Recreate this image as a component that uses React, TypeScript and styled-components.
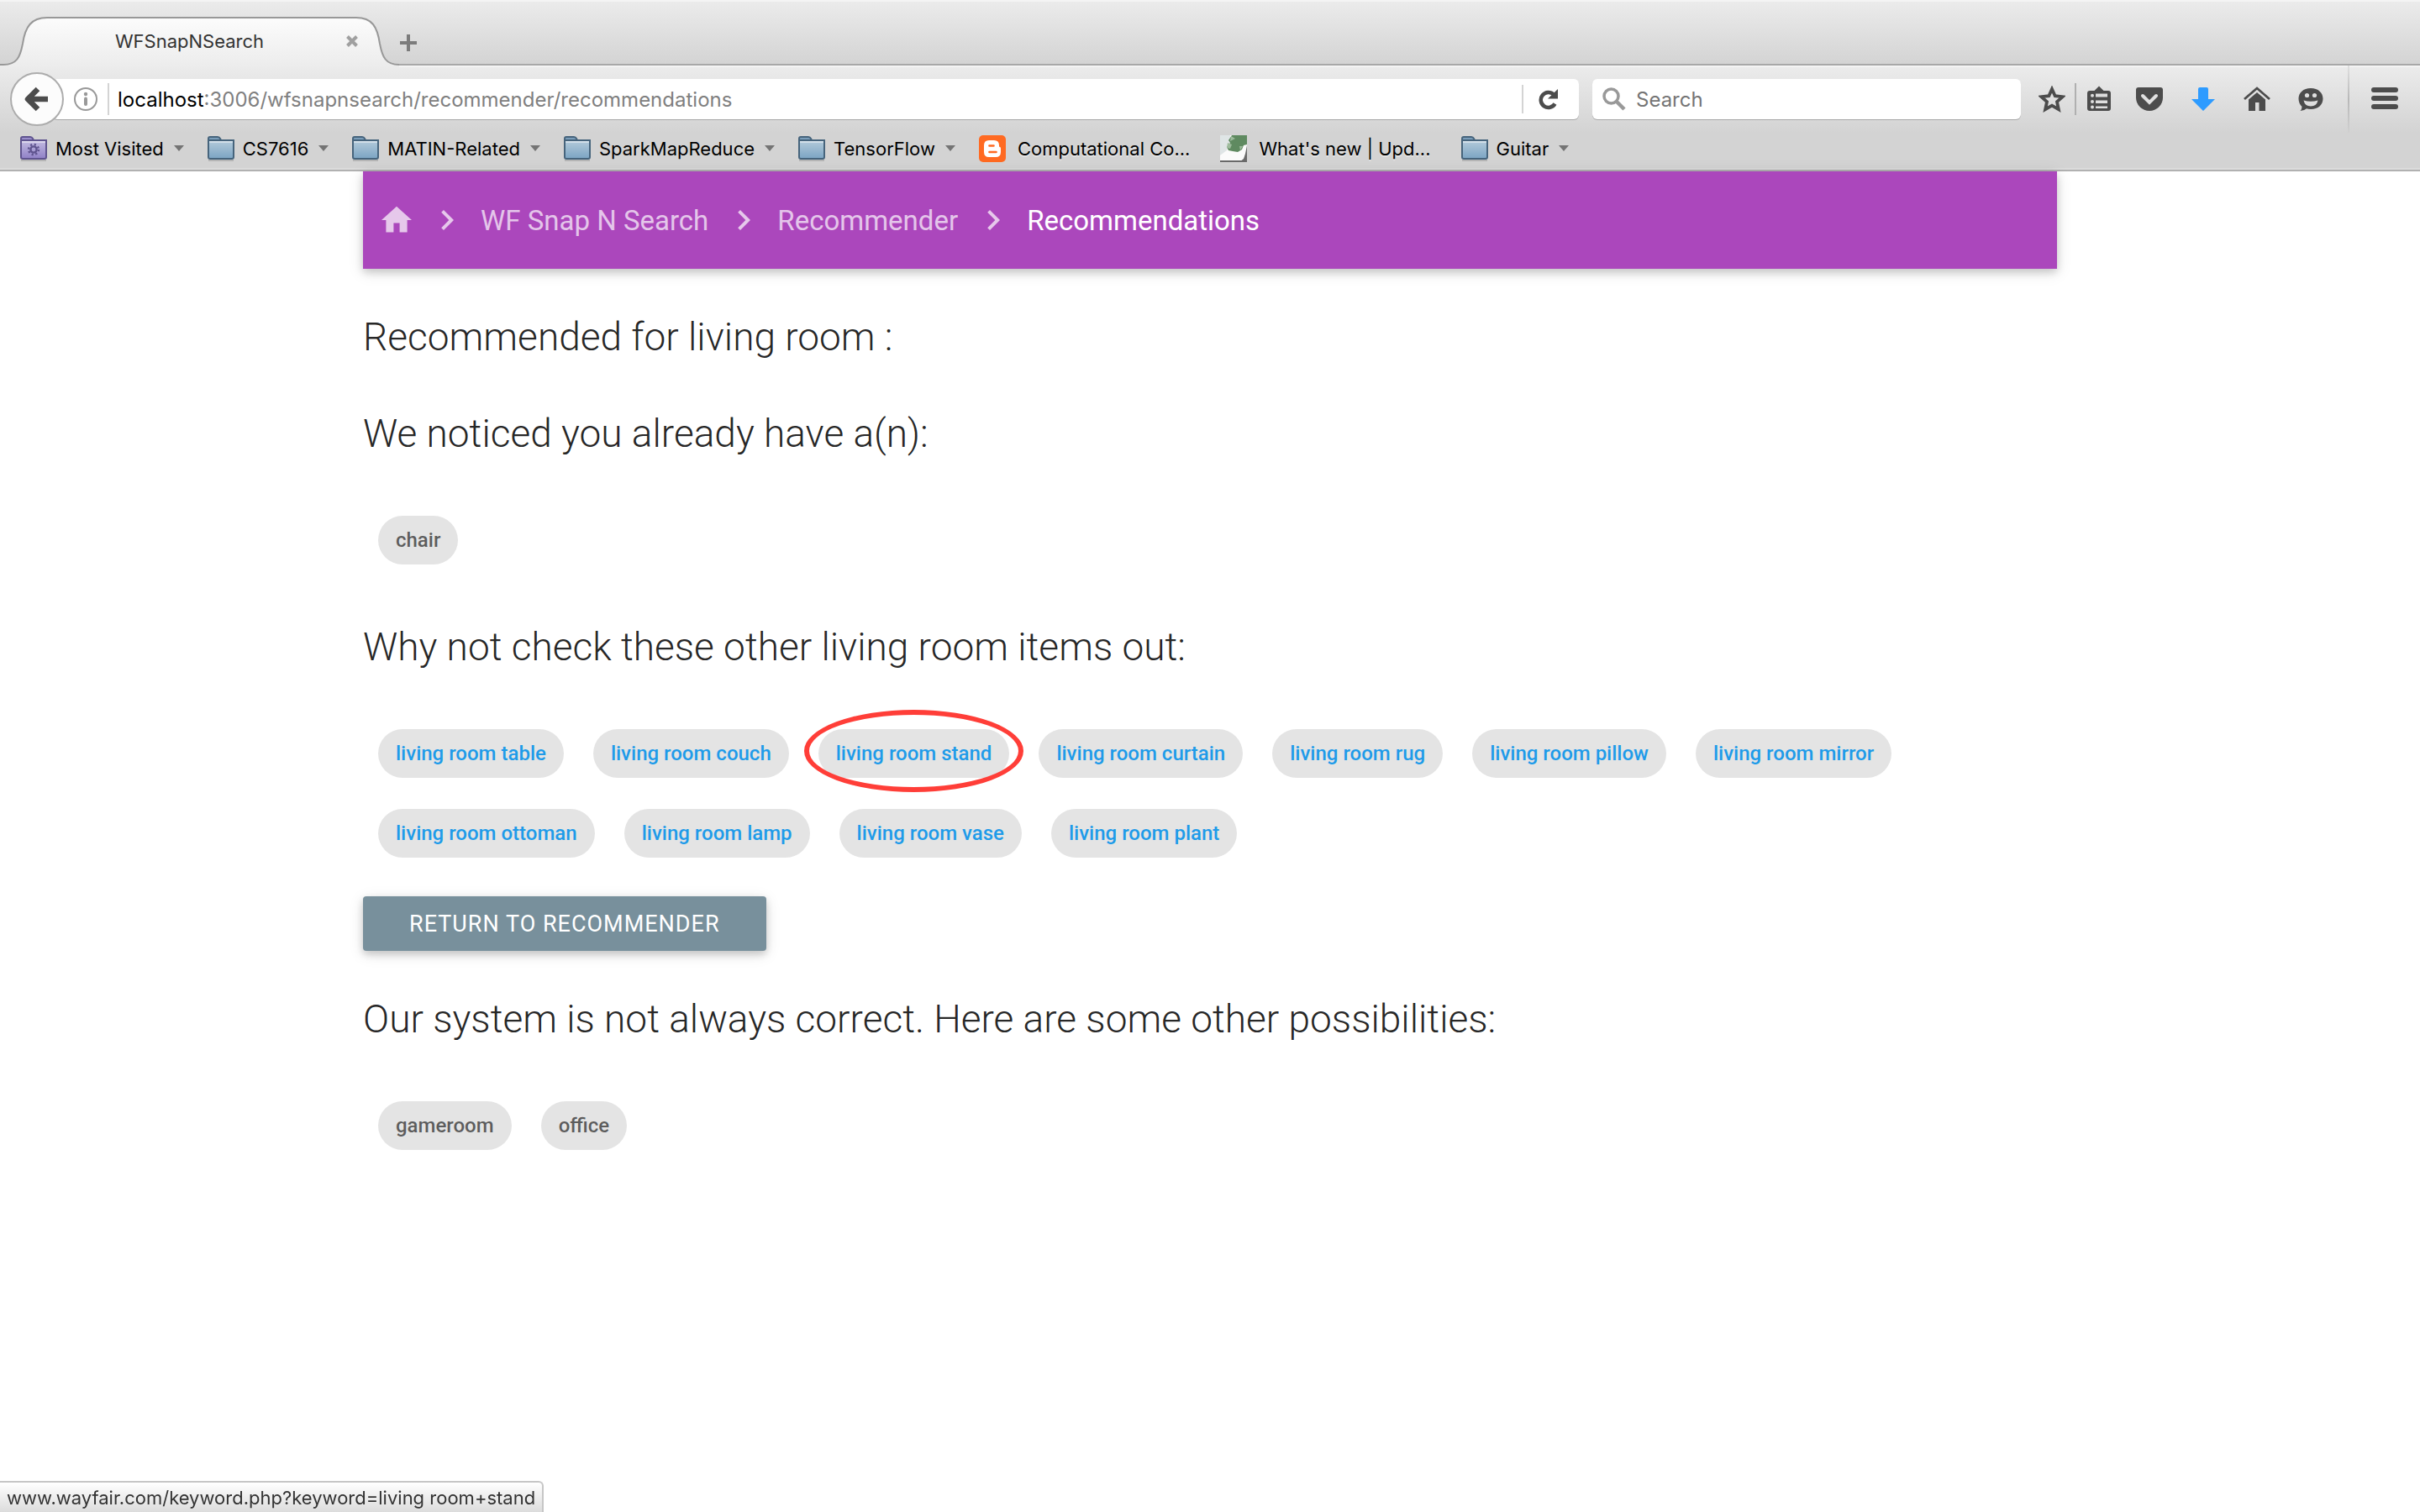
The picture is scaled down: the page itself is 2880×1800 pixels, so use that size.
import React from "react";
import styled, { createGlobalStyle, css } from "styled-components";

const GlobalStyle = createGlobalStyle`
  *, *::before, *::after { box-sizing: border-box; }
  body { margin: 0; background: #fff; }
  button, input { font: inherit; color: inherit; background: none; border: 0; padding: 0; margin: 0; outline: 0; }
  button { cursor: pointer; }
  a { color: inherit; text-decoration: none; }
  svg { display: block; flex: none; }
`;

const uiFont = `Inter, "Liberation Sans", sans-serif`;
const pageFont = `Roboto, "Liberation Sans", sans-serif`;

/* ---------- browser window ---------- */

const Window = styled.div`
  min-height: 100vh;
  display: flex;
  flex-direction: column;
  background: #fff;
`;

const Chrome = styled.header`
  font-family: ${uiFont};
  background: #d3d3d3;
  border-bottom: 2px solid #b1b1b1;
`;

const TabStrip = styled.div`
  height: 78px;
  display: flex;
  align-items: flex-end;
  background: linear-gradient(#ebebeb, #d3d3d3);
  border-top: 2px solid #f4f4f4;
  box-shadow: inset 0 -2px 0 #a8a8a8;
`;

const Tab = styled.div`
  position: relative;
  width: 475px;
  height: 58px;
  padding: 0 48px 0 40px;
  display: flex;
  align-items: center;
`;

const TabShape = styled.svg`
  position: absolute;
  left: 0;
  top: 0;
`;

const TabTitle = styled.button`
  position: relative;
  flex: 1;
  padding: 4px 7px;
  font-size: 22px;
  line-height: 28px;
  color: #333;
`;

const TabClose = styled.button`
  position: relative;
`;

const NewTab = styled.button`
  height: 53px;
  display: flex;
`;

const Toolbar = styled.div`
  height: 80px;
  padding: 0 26px 0 12px;
  display: flex;
  align-items: center;
  background: linear-gradient(#ececec, #d3d3d3);
  box-shadow: inset 0 2px 0 #f4f4f4;
`;

const BackButton = styled.button`
  position: relative;
  z-index: 1;
  width: 64px;
  height: 64px;
  display: grid;
  place-items: center;
  border: 2px solid #acacac;
  border-radius: 50%;
  background: #fcfcfc;
`;

const fieldBox = css`
  height: 48px;
  display: flex;
  align-items: center;
  background: #fff;
  border-radius: 6px;
  box-shadow: 0 1px 0 #a6a6a6;
  font-size: 24px;
  line-height: 30px;
  label, input { padding-top: 2px; }
`;

const AddressBar = styled.form`
  ${fieldBox}
  flex: 1;
  margin-left: -14px;
  padding: 0 22px 0 26px;
`;

const Divider = styled.span<{ $tall?: boolean; $dark?: boolean }>`
  width: 2px;
  height: ${(p) => (p.$tall ? 38 : 34)}px;
  background: ${(p) => (p.$dark ? "#b0b0b0" : "#d4d4d4")};
`;

const SiteInfo = styled.button`
  margin-right: 12px;
`;

const Host = styled.label`
  padding-left: 10px;
  color: #000;
`;

const Path = styled.input`
  flex: 1;
  color: #808080;
`;

const Reload = styled.button`
  margin-left: 18px;
`;

const SearchBox = styled.form`
  ${fieldBox}
  width: 510px;
  margin: 0 21px 0 16px;
  padding: 0 12px;
`;

const SearchInput = styled.input`
  flex: 1;
  min-width: 0;
  margin-left: 12px;
  &::placeholder { color: #757575; opacity: 1; }
`;

const StarGroup = styled.div`
  display: flex;
  align-items: center;
  gap: 11px;
  margin-right: 28px;
`;

const ActionGroup = styled.div`
  display: flex;
  align-items: center;
  gap: 32px;
`;

const MenuDivider = styled.span`
  align-self: stretch;
  width: 2px;
  margin: 0 26px 0 28px;
  background: linear-gradient(#e0e0e0, #b8b8b8 50%, #d0d0d0);
`;

const Bookmarks = styled.nav`
  height: 44px;
  padding: 0 24px 5px;
  display: flex;
  align-items: center;
  gap: 28px;
  border-bottom: 2px solid #dcdcdc;
  font-size: 22px;
  line-height: 28px;
  color: #000;
  text-shadow: 0 2px 0 rgba(255, 255, 255, 0.4);
`;

const FolderButton = styled.button`
  display: flex;
  align-items: center;
  gap: 10px;
`;

const SiteLink = styled.a`
  display: flex;
  align-items: center;
  gap: 14px;
  margin-right: 8px;
`;

const Arrow = styled.svg`
  margin-left: 2px;
`;

/* ---------- page ---------- */

const Container = styled.main`
  width: 70%;
  margin: 0 auto;
  display: flex;
  flex-direction: column;
  align-items: stretch;
  font-family: ${pageFont};
  color: rgba(0, 0, 0, 0.87);
`;

const Breadcrumbs = styled.nav`
  height: 116px;
  padding-left: 22px;
  display: flex;
  align-items: center;
  background: #ab47bc;
  color: rgba(255, 255, 255, 0.7);
  box-shadow: 0 4px 9px rgba(0, 0, 0, 0.16), 0 4px 18px rgba(0, 0, 0, 0.12);
  font-size: 33px;
`;

const Crumb = styled.a<{ $current?: boolean }>`
  ${(p) => p.$current && "color: #fff;"}
`;

const CrumbArrow = styled.svg`
  margin: 0 16px 0 18px;
`;

const Section = styled.section<{ $top: number }>`
  margin-top: ${(p) => p.$top}px;
  display: flex;
  flex-direction: column;
  gap: 74px;
`;

const Heading = styled.h5`
  margin: 0;
  font-size: 46px;
  font-weight: 300;
  line-height: 48px;
`;

const Chips = styled.ul`
  list-style: none;
  margin: 0;
  padding: 0 0 0 18px;
  display: flex;
  flex-wrap: wrap;
  gap: 37px 35px;
`;

const Chip = styled.li<{ $link?: boolean }>`
  position: relative;
  height: 58px;
  padding: 0 21px;
  border-radius: 29px;
  background: #e4e4e4;
  color: ${(p) => (p.$link ? "#1e9be9" : "rgba(0, 0, 0, 0.6)")};
  font-size: 24px;
  font-weight: 500;
  line-height: 58px;
`;

const Marker = styled.span`
  position: absolute;
  inset: -23px -17px -17px;
  border: 6px solid #ff3e38;
  border-radius: 50%;
  pointer-events: none;
`;

const ReturnButton = styled.button`
  align-self: flex-start;
  margin-top: 46px;
  height: 65px;
  padding: 0 55px;
  border-radius: 4px;
  background: #78909c;
  color: #fff;
  box-shadow: 0 4px 9px rgba(0, 0, 0, 0.16), 0 4px 18px rgba(0, 0, 0, 0.12);
  font-size: 27px;
  letter-spacing: 1px;
  text-transform: uppercase;
`;

const StatusBar = styled.output`
  position: fixed;
  left: 0;
  bottom: 0;
  height: 37px;
  padding: 0 8px;
  border: solid #c6c6c6;
  border-width: 2px 2px 0 0;
  border-radius: 0 6px 0 0;
  background: linear-gradient(#fff, #dcdcdc);
  color: #333;
  font-family: ${uiFont};
  font-size: 22px;
  line-height: 36px;
`;

/* ---------- drawings ---------- */

const ink = "#4c4c4c";

const Icon = ({ children }: { children: React.ReactNode }) => (
  <svg width="32" height="32" viewBox="0 0 32 32" fill={ink} aria-hidden="true">
    {children}
  </svg>
);

const Folder = ({ smart }: { smart?: boolean }) => {
  const edge = smart ? "#5f548f" : "#46647c";
  const id = smart ? "smart-folder" : "folder";
  return (
    <svg width="32" height="30" viewBox="0 0 32 30" aria-hidden="true">
      <defs>
        <linearGradient id={id} x1="0" y1="0" x2="0" y2="1">
          <stop offset="0" stopColor={smart ? "#c3bce2" : "#b4cbdb"} />
          <stop offset="1" stopColor={smart ? "#8f80c6" : "#7ba4c3"} />
        </linearGradient>
      </defs>
      <path d="M1 29h30" stroke="#b5b5b5" strokeWidth="2" />
      <path d="M1 6V3q0-2 2-2h9q2 0 3 2l1 2h14q1 0 1 1" fill={smart ? "#9a8ecb" : "#7a9dba"} stroke={edge} strokeWidth="2" />
      <path d="M1 5h30v20q0 2-2 2H3q-2 0-2-2z" fill={`url(#${id})`} stroke={edge} strokeWidth="2" />
      <path d="M2 7h28" stroke="#fff" strokeOpacity=".45" strokeWidth="2" />
      {smart && (
        <g fill="none" stroke="#5f548f">
          <circle cx="16" cy="16" r="3.6" strokeWidth="2.4" />
          <circle cx="16" cy="16" r="6" strokeWidth="2.4" strokeDasharray="2.2 2.51" />
        </g>
      )}
    </svg>
  );
};

const DropArrow = () => (
  <Arrow width="12" height="8" viewBox="0 0 12 8" aria-hidden="true">
    <path d="M0 0h12L6 7z" fill="#747474" />
  </Arrow>
);

const Blogger = () => (
  <svg width="32" height="32" viewBox="0 0 32 32" aria-hidden="true">
    <rect width="32" height="32" rx="5" fill="#ff6a22" />
    <path d="M12 6h6q6 0 6 6v1q0 1 1 1 1 0 1 2v4q0 6-6 6h-8q-6 0-6-6v-8q0-6 6-6z" fill="#fff" />
    <path d="M12.500 12.500h5M12.500 20h8" stroke="#ff6a22" strokeWidth="2.600" strokeLinecap="round" />
  </svg>
);

const Leaf = () => (
  <svg width="32" height="32" viewBox="0 0 32 32" aria-hidden="true">
    <path d="M0 0h32v32H0z" fill="#fbfbfb" />
    <path d="M0 0h12v8L8 18 0 24z" fill="#dfe5e6" />
    <path d="M14 0h18v11l-4 1-2 5-5 3-6-1-5-1-2-4 4-5-2-3z" fill="#5f8a60" />
    <path d="M9 9l5 2-2 5-4-1zM13 1l5 3-6 3zM23 13l4 0-3 5z" fill="#9dbb9c" />
    <path d="M32 12v20h-9l5-4 2-6zM0 30h32v2H0z" fill="#6a6a6a" />
  </svg>
);

const Chevron = () => (
  <CrumbArrow width="48" height="48" viewBox="0 0 24 24" fill="currentColor" aria-hidden="true">
    <path d="M10 6L8.590 7.410 13.170 12l-4.580 4.590L10 18l6-6z" />
  </CrumbArrow>
);

/* ---------- data ---------- */

const items = ["table", "couch", "stand", "curtain", "rug", "pillow", "mirror", "ottoman", "lamp", "vase", "plant"];
const owned = ["chair"];
const others = ["gameroom", "office"];
const folders = ["CS7616", "MATIN-Related", "SparkMapReduce", "TensorFlow"];

const BookmarkFolder = ({ name, smart }: { name: string; smart?: boolean }) => (
  <FolderButton type="button">
    <Folder smart={smart} />
    {name}
    <DropArrow />
  </FolderButton>
);

export default function App() {
  return (
    <Window>
      <GlobalStyle />
      <Chrome>
        <TabStrip>
          <Tab>
            <TabShape width="475" height="60" viewBox="0 0 475 60" aria-hidden="true">
              <defs>
                <linearGradient id="tab" x1="0" y1="0" x2="0" y2="1">
                  <stop offset="0" stopColor="#fcfcfc" />
                  <stop offset="1" stopColor="#ececec" />
                </linearGradient>
              </defs>
              <path
                d="M0 60V57H4C20 57 24 48 27 32C30 12 37 1 56 1H424C443 1 449 12 452 32C455 48 459 57 475 57V60Z"
                fill="url(#tab)"
              />
              <path
                d="M0 57H4C20 57 24 48 27 32C30 12 37 1 56 1H424C443 1 449 12 452 32C455 48 459 57 475 57"
                fill="none"
                stroke="#989898"
                strokeWidth="2"
              />
            </TabShape>
            <TabTitle type="button">WFSnapNSearch</TabTitle>
            <TabClose type="button" aria-label="Close tab">
              <svg width="16" height="16" viewBox="0 0 16 16" aria-hidden="true">
                <path d="M2.500 2.500l11 11M13.500 2.500l-11 11" stroke="#a0a0a0" strokeWidth="4" />
              </svg>
            </TabClose>
          </Tab>
          <NewTab type="button" aria-label="New tab">
            <svg width="22" height="38" viewBox="0 0 22 38" aria-hidden="true">
              <path d="M11 16v20M1 26h20" stroke="#7c7c7c" strokeWidth="4" />
            </svg>
          </NewTab>
        </TabStrip>

        <Toolbar>
          <BackButton type="button" aria-label="Back">
            <Icon>
              <path d="M17 4L5 16 17 28M6 16h23" fill="none" stroke={ink} strokeWidth="6.500" strokeLinejoin="round" />
            </Icon>
          </BackButton>
          <AddressBar onSubmit={(e) => e.preventDefault()}>
            <SiteInfo type="button" aria-label="Site information">
              <svg width="28" height="28" viewBox="0 0 28 28" aria-hidden="true">
                <circle cx="14" cy="14" r="13" fill="none" stroke="#999" strokeWidth="2" />
                <path d="M14 13.500v6.500" stroke="#999" strokeWidth="4" strokeLinecap="round" />
                <circle cx="14" cy="8" r="2.200" fill="#999" />
              </svg>
            </SiteInfo>
            <Divider $tall />
            <Host htmlFor="address">localhost</Host>
            <Path id="address" type="text" defaultValue=":3006/wfsnapnsearch/recommender/recommendations" />
            <Divider />
            <Reload type="button" aria-label="Reload">
              <svg width="26" height="26" viewBox="0 0 26 26" aria-hidden="true">
                <path d="M19.500 18.500A9 9 0 1 1 18 7.500" fill="none" stroke={ink} strokeWidth="4.500" />
                <path d="M23 1v11.500H11z" fill={ink} />
              </svg>
            </Reload>
          </AddressBar>
          <SearchBox onSubmit={(e) => e.preventDefault()}>
            <svg width="28" height="28" viewBox="0 0 28 28" fill="none" stroke="#999" aria-hidden="true">
              <circle cx="10.500" cy="10.500" r="8.500" strokeWidth="3.500" />
              <path d="M16.500 16.500l9.500 9.500" strokeWidth="4.500" />
            </svg>
            <SearchInput type="text" aria-label="Search" placeholder="Search" />
          </SearchBox>
          <StarGroup>
            <button type="button" aria-label="Bookmark this page">
              <Icon>
                <path
                  d="M16 4l3.700 8.200 9 1-6.700 6 1.900 9L16 23.700 8.100 28.200l1.900-9-6.700-6 9-1z"
                  fill="none"
                  stroke={ink}
                  strokeWidth="3.800"
                />
              </Icon>
            </button>
            <Divider $tall $dark />
            <button type="button" aria-label="Bookmarks">
              <Icon>
                <path d="M10.500 6L16 .5 21.500 6H27q3 0 3 3v18q0 3-3 3H5q-3 0-3-3V9q0-3 3-3z" />
                <g fill="#dedede">
                  <path d="M12 10h14v4H12zM12 18h14v3.500H12zM12 25h14v2.500H12z" transform="translate(0 -.5)" />
                  <circle cx="8" cy="11.700" r="2" />
                  <circle cx="8" cy="19" r="2" />
                  <circle cx="8" cy="25.500" r="2" />
                </g>
              </Icon>
            </button>
          </StarGroup>
          <ActionGroup>
            <button type="button" aria-label="Pocket">
              <Icon>
                <path d="M3 2h26q3 0 3 3v9a16 16 0 0 1-32 0V5q0-3 3-3z" />
                <path d="M8 12l8 8 8-8" fill="none" stroke="#e0e0e0" strokeWidth="4" strokeLinecap="round" />
              </Icon>
            </button>
            <button type="button" aria-label="Downloads">
              <Icon>
                <path d="M12 2h8q2 0 2 2v12h8L16 30 2 16h8V4q0-2 2-2z" fill="#2d9bff" />
              </Icon>
            </button>
            <button type="button" aria-label="Home">
              <Icon>
                <path d="M1 16L16 3l15 13" fill="none" stroke={ink} strokeWidth="2.800" />
                <path d="M6 16.500L16 8l10 8.500V30h-7.500V20h-4.500v10H6z" />
              </Icon>
            </button>
            <button type="button" aria-label="Chat">
              <Icon>
                <path d="M16 3c9 0 14.500 5.500 14.500 12.500S25 28 16 28q-3 0-5-.7Q8 30 3.500 30q2-2 2-5Q1.500 21 1.500 15.500C1.500 8.500 7 3 16 3z" />
                <g fill="#dedede">
                  <circle cx="11.500" cy="11.500" r="2.600" />
                  <circle cx="20.500" cy="11.500" r="2.600" />
                  <path d="M7.500 17.500q8.500 2.500 17 0Q23 24.500 16 24.500T7.500 17.500z" />
                </g>
              </Icon>
            </button>
          </ActionGroup>
          <MenuDivider />
          <button type="button" aria-label="Open menu">
            <Icon>
              <rect y="2" width="32" height="6" rx="3" />
              <rect y="12" width="32" height="6" rx="3" />
              <rect y="22" width="32" height="6" rx="3" />
            </Icon>
          </button>
        </Toolbar>

        <Bookmarks aria-label="Bookmarks toolbar">
          <BookmarkFolder name="Most Visited" smart />
          {folders.map((name) => (
            <BookmarkFolder key={name} name={name} />
          ))}
          <SiteLink href="#computational">
            <Blogger />
            Computational Co...
          </SiteLink>
          <SiteLink href="#whats-new">
            <Leaf />
            What's new | Upd...
          </SiteLink>
          <BookmarkFolder name="Guitar" />
        </Bookmarks>
      </Chrome>

      <Container>
        <Breadcrumbs aria-label="Breadcrumb">
          <Crumb href="#home" aria-label="Home">
            <svg width="36" height="44" viewBox="2 0 20 24" fill="currentColor" aria-hidden="true">
              <path d="M10 20v-6h4v6h5v-8h3L12 3 2 12h3v8z" />
            </svg>
          </Crumb>
          <Chevron />
          <Crumb href="#wf">WF Snap N Search</Crumb>
          <Chevron />
          <Crumb href="#recommender">Recommender</Crumb>
          <Chevron />
          <Crumb href="#recommendations" $current aria-current="page">
            Recommendations
          </Crumb>
        </Breadcrumbs>

        <Section $top={57}>
          <Heading>Recommended for living room :</Heading>
        </Section>
        <Section $top={67}>
          <Heading>We noticed you already have a(n):</Heading>
          <Chips>
            {owned.map((name) => (
              <Chip key={name}>{name}</Chip>
            ))}
          </Chips>
        </Section>
        <Section $top={74}>
          <Heading>Why not check these other living room items out:</Heading>
          <Chips>
            {items.map((name) => (
              <Chip key={name} $link>
                <a href={`#${name}`}>living room {name}</a>
                {name === "stand" && <Marker />}
              </Chip>
            ))}
          </Chips>
        </Section>
        <ReturnButton type="button">Return to Recommender</ReturnButton>
        <Section $top={57}>
          <Heading>Our system is not always correct. Here are some other possibilities:</Heading>
          <Chips>
            {others.map((name) => (
              <Chip key={name}>{name}</Chip>
            ))}
          </Chips>
        </Section>
      </Container>

      <StatusBar>www.wayfair.com/keyword.php?keyword=living room+stand</StatusBar>
    </Window>
  );
}
